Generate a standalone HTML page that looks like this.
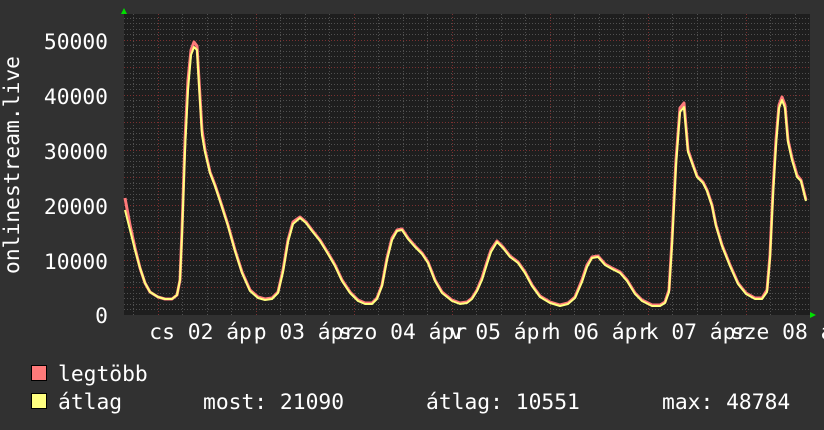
<!DOCTYPE html>
<html><head><meta charset="utf-8"><style>
html,body{margin:0;padding:0;background:#313131;}
svg{display:block}
text{font-family:"DejaVu Sans Mono","Liberation Mono",monospace;font-size:21.3px;fill:#fff;}
</style></head><body>
<svg width="824" height="430" viewBox="0 0 824 430" xmlns="http://www.w3.org/2000/svg">
<rect width="824" height="430" fill="#313131"/>
<rect x="124" y="14" width="686" height="301" fill="#1e1e1e"/>
<g stroke="#505050" stroke-width="1" stroke-dasharray="1,2">
<path d="M182.5 14V315M207.5 14V315M231.5 14V315M280.5 14V315M305.5 14V315M329.5 14V315M378.5 14V315M403.5 14V315M427.5 14V315M476.5 14V315M501.5 14V315M525.5 14V315M574.5 14V315M599.5 14V315M623.5 14V315M672.5 14V315M697.5 14V315M721.5 14V315M770.5 14V315M795.5 14V315M133.5 14V315"/>
<path d="M124 309.5H810M124 304.5H810M124 298.5H810M124 293.5H810M124 282.5H810M124 276.5H810M124 271.5H810M124 265.5H810M124 254.5H810M124 249.5H810M124 243.5H810M124 238.5H810M124 227.5H810M124 221.5H810M124 216.5H810M124 210.5H810M124 199.5H810M124 194.5H810M124 188.5H810M124 183.5H810M124 172.5H810M124 166.5H810M124 161.5H810M124 155.5H810M124 144.5H810M124 139.5H810M124 133.5H810M124 128.5H810M124 117.5H810M124 111.5H810M124 106.5H810M124 100.5H810M124 89.5H810M124 84.5H810M124 78.5H810M124 73.5H810M124 62.5H810M124 56.5H810M124 51.5H810M124 45.5H810M124 34.5H810M124 29.5H810M124 23.5H810M124 18.5H810"/>
</g>
<g stroke="#7a3030" stroke-width="1" stroke-dasharray="1,2">
<path d="M158.5 14V315M256.5 14V315M354.5 14V315M452.5 14V315M550.5 14V315M648.5 14V315M746.5 14V315"/>
<path d="M124 287.5H810M124 260.5H810M124 232.5H810M124 205.5H810M124 177.5H810M124 150.5H810M124 122.5H810M124 95.5H810M124 67.5H810M124 40.5H810"/>
</g>
<polygon points="121,14 127,14 124,8" fill="#00e000"/>
<polygon points="810,312 810,318 816,315" fill="#00e000"/>
<polyline fill="none" stroke="#ff7a7a" stroke-width="3" stroke-linejoin="round" points="125,198 130,225 135,248 140,268 145,283 150,292 158,297 165,299 172,299 177,295 180,280 182,230 185,140 188,80 191,50 194,42 197,46 199,80 202,130 205,150 210,172 215,185 220,200 228,225 235,250 242,272 250,290 258,297 265,299 272,298 278,292 283,270 288,240 293,222 300,217 306,222 312,230 320,240 328,253 335,265 342,280 350,292 358,300 365,303 372,303 377,298 382,285 387,258 392,238 397,230 402,229 408,238 415,246 422,253 428,262 435,280 442,292 452,300 460,303 467,302 472,298 477,290 482,278 487,262 491,250 497,241 503,247 510,256 518,262 525,272 532,285 540,296 550,302 560,305 568,303 575,297 582,280 587,265 592,257 598,256 605,264 612,268 620,272 627,280 635,293 642,300 652,305 660,305 665,302 669,290 672,240 676,160 680,108 684,103 688,150 692,162 697,176 703,182 707,190 712,205 716,225 722,245 730,265 738,283 746,293 755,298 762,298 767,290 770,255 773,190 776,140 779,105 782,97 785,105 788,140 792,158 797,175 801,180 806,200"/>
<polyline fill="none" stroke="#ffff80" stroke-width="2" stroke-linejoin="round" points="125,210 130,230 135,250 140,268 145,283 150,292 158,297 165,299 172,299 177,295 180,280 182,235 185,150 188,90 191,55 194,47 197,50 199,85 202,135 205,152 210,173 215,186 220,201 228,226 235,251 242,273 250,291 258,298 265,300 272,299 278,293 283,272 288,242 293,224 300,218 306,223 312,231 320,241 328,254 335,266 342,281 350,293 358,301 365,304 372,304 377,299 382,286 387,260 392,240 397,231 402,230 408,239 415,247 422,254 428,263 435,281 442,293 452,301 460,304 467,303 472,299 477,291 482,280 487,264 491,252 497,242 503,248 510,257 518,263 525,273 532,286 540,297 550,303 560,306 568,304 575,298 582,282 587,267 592,258 598,257 605,265 612,269 620,273 627,281 635,294 642,301 652,306 660,306 665,303 669,292 672,245 676,165 680,112 684,107 688,152 692,163 697,177 703,183 707,191 712,206 716,226 722,246 730,266 738,284 746,294 755,299 762,299 767,292 770,258 773,195 776,145 779,108 782,100 785,108 788,142 792,160 797,177 801,181 806,201"/>
<g text-anchor="end">
<text x="108" y="49">50000</text>
<text x="108" y="104">40000</text>
<text x="108" y="159">30000</text>
<text x="108" y="214">20000</text>
<text x="108" y="269">10000</text>
<text x="108" y="323">0</text>
</g>
<text transform="translate(19,165) rotate(-90)" text-anchor="middle">onlinestream.live</text>
<g text-anchor="middle">
<text x="207" y="339">cs 02 ápr</text>
<text x="305" y="339">p 03 ápr</text>
<text x="403" y="339">szo 04 ápr</text>
<text x="501" y="339">v 05 ápr</text>
<text x="599" y="339">h 06 ápr</text>
<text x="697" y="339">k 07 ápr</text>
<text x="795" y="339">sze 08 ápr</text>
</g>
<rect x="31.5" y="365.5" width="15" height="15" fill="#ff7a7a" stroke="#000"/>
<rect x="31.5" y="393.5" width="15" height="15" fill="#ffff80" stroke="#000"/>
<text x="58" y="381">legtöbb</text>
<text x="58" y="409">átlag</text>
<text x="203" y="409">most: 21090</text>
<text x="426" y="409">átlag: 10551</text>
<text x="662" y="409">max: 48784</text>
</svg>
</body></html>
